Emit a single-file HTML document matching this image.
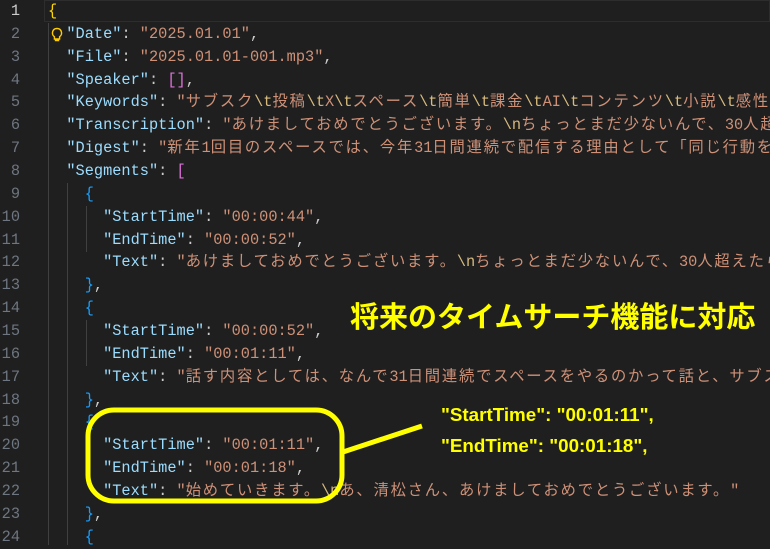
<!DOCTYPE html>
<html><head><meta charset="utf-8"><style>
body{margin:0;width:770px;height:545px;background:#1f1f1f;overflow:hidden;position:relative;font-family:"Liberation Mono","Noto Sans CJK JP",monospace;font-size:15.3px}
.ln{position:absolute;left:0;width:20px;text-align:right;color:#6e7681;height:22.86px;line-height:22.86px}
.l{position:absolute;left:48px;right:0;overflow:hidden;white-space:pre;height:22.86px;line-height:22.86px;color:#cccccc}
.k{color:#9cdcfe}.s{color:#ce9178}.e{color:#d7ba7d}.y{color:#ffd700}.p{color:#da70d6}.b{color:#179fff}
.j{letter-spacing:1.8px}
.g{position:absolute;width:1px;background:#404040}
</style></head><body>
<div style="position:absolute;left:44px;top:0;width:726px;height:22px;border:1px solid #2d2d2d;box-sizing:border-box"></div>
<div class="g" style="left:48px;top:23px;height:522px"></div>
<div class="g" style="left:67px;top:183px;height:362px"></div>
<div class="g" style="left:86px;top:206px;height:46px"></div>
<div class="g" style="left:86px;top:320px;height:46px"></div>
<div class="g" style="left:86px;top:434px;height:46px"></div>
<div id="nums"></div>
<div class="l" style="top:0"><span class="y">{</span></div>
<div class="l" style="top:22.86px">  <span class="k">"Date"</span>: <span class="s">"2025.01.01"</span>,</div>
<svg style="position:absolute;left:50px;top:27px" width="14" height="16" viewBox="0 0 14 16"><path d="M7 1.5a4.5 4.5 0 0 0-2.6 8.2V12h5.2V9.7A4.5 4.5 0 0 0 7 1.5zM4.8 13.5h4.4" fill="none" stroke="#ffcc00" stroke-width="1.4"/></svg>
<div class="l" style="top:45.72px">  <span class="k">"File"</span>: <span class="s">"2025.01.01-001.mp3"</span>,</div>
<div class="l" style="top:68.58px">  <span class="k">"Speaker"</span>: <span class="p">[]</span>,</div>
<div class="l" style="top:91.44px">  <span class="k">"Keywords"</span>: <span class="s">"<span class="j">サブスク</span><span class="e">\t</span><span class="j">投稿</span><span class="e">\t</span>X<span class="e">\t</span><span class="j">スペース</span><span class="e">\t</span><span class="j">簡単</span><span class="e">\t</span><span class="j">課金</span><span class="e">\t</span>AI<span class="e">\t</span><span class="j">コンテンツ</span><span class="e">\t</span><span class="j">小説</span><span class="e">\t</span><span class="j">感性</span></span></div>
<div class="l" style="top:114.3px">  <span class="k">"Transcription"</span>: <span class="s">"<span class="j">あけましておめでとうございます。</span><span class="e">\n</span><span class="j">ちょっとまだ少ないんで、</span>30<span class="j">人超え</span></span></div>
<div class="l" style="top:137.16px">  <span class="k">"Digest"</span>: <span class="s">"<span class="j">新年</span>1<span class="j">回目のスペースでは、今年</span>31<span class="j">日間連続で配信する理由として「同じ行動を続</span></span></div>
<div class="l" style="top:160.02px">  <span class="k">"Segments"</span>: <span class="p">[</span></div>
<div class="l" style="top:182.88px">    <span class="b">{</span></div>
<div class="l" style="top:205.74px">      <span class="k">"StartTime"</span>: <span class="s">"00:00:44"</span>,</div>
<div class="l" style="top:228.6px">      <span class="k">"EndTime"</span>: <span class="s">"00:00:52"</span>,</div>
<div class="l" style="top:251.46px">      <span class="k">"Text"</span>: <span class="s">"<span class="j">あけましておめでとうございます。</span><span class="e">\n</span><span class="j">ちょっとまだ少ないんで、</span>30<span class="j">人超えたら</span></span></div>
<div class="l" style="top:274.32px">    <span class="b">}</span>,</div>
<div class="l" style="top:297.18px">    <span class="b">{</span></div>
<div class="l" style="top:320.04px">      <span class="k">"StartTime"</span>: <span class="s">"00:00:52"</span>,</div>
<div class="l" style="top:342.9px">      <span class="k">"EndTime"</span>: <span class="s">"00:01:11"</span>,</div>
<div class="l" style="top:365.76px">      <span class="k">"Text"</span>: <span class="s">"<span class="j">話す内容としては、なんで</span>31<span class="j">日間連続でスペースをやるのかって話と、サブス</span></span></div>
<div class="l" style="top:388.62px">    <span class="b">}</span>,</div>
<div class="l" style="top:411.48px">    <span class="b">{</span></div>
<div class="l" style="top:434.34px">      <span class="k">"StartTime"</span>: <span class="s">"00:01:11"</span>,</div>
<div class="l" style="top:457.2px">      <span class="k">"EndTime"</span>: <span class="s">"00:01:18"</span>,</div>
<div class="l" style="top:480.06px">      <span class="k">"Text"</span>: <span class="s">"<span class="j">始めていきます。</span><span class="e">\n</span><span class="j">あ、清松さん、あけましておめでとうございます。</span>"</span></div>
<div class="l" style="top:502.92px">    <span class="b">}</span>,</div>
<div class="l" style="top:525.78px">    <span class="b">{</span></div>
<script>
var h='';for(var i=1;i<=24;i++){h+='<div class="ln" style="top:'+((i-1)*22.86)+'px;'+(i==1?'color:#cccccc':'')+'">'+i+'</div>';}
document.getElementById('nums').innerHTML=h;
</script>
<svg style="position:absolute;left:0;top:0" width="770" height="545">
<rect x="88" y="410" width="254" height="91" rx="26" ry="26" fill="none" stroke="#ffff00" stroke-width="5"/>
<line x1="343" y1="452" x2="422" y2="426" stroke="#ffff00" stroke-width="5"/>
</svg>
<div style="position:absolute;left:350px;top:298px;font-family:'Liberation Sans','Noto Sans CJK JP',sans-serif;font-weight:bold;font-size:29px;color:#ffff00;white-space:nowrap;line-height:40px">将来のタイムサーチ機能に対応</div>
<div style="position:absolute;left:441px;top:399px;font-family:'Liberation Sans',sans-serif;font-weight:bold;font-size:18.8px;color:#ffff00;white-space:nowrap;line-height:31px">"StartTime": "00:01:11",<br>"EndTime": "00:01:18",</div>
</body></html>
